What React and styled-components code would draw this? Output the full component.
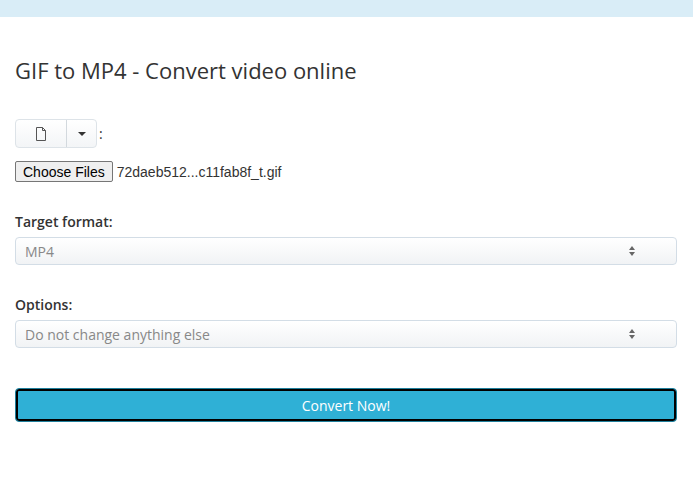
import React from "react";
import styled, { createGlobalStyle } from "styled-components";

const G = createGlobalStyle`
  body { margin: 0; font-family: "Open Sans", sans-serif; color: #333; background: #fff; }
`;
const TopBar = styled.div`height: 17px; background: #d9edf7;`;
const Main = styled.div`padding: 0 16px 0 15px; display: flex; flex-direction: column;`;
const Title = styled.h1`font-size: 22px; font-weight: 400; margin: 38px 0 0; line-height: 30px; color: #333;`;
const Row = styled.div`display: flex; align-items: center; margin-top: ${p => p.$mt}px;`;
const Split = styled.div`display: flex; height: 27px; border: 1px solid #dde3e8; border-radius: 4px; background: linear-gradient(#fff, #f3f5f7);`;
const SplitPart = styled.div`display: flex; align-items: center; justify-content: center; width: ${p => p.$w}px; border-left: ${p => p.$sep ? "1px solid #d3d9de" : "none"};`;
const Colon = styled.span`font-size: 14px; margin-left: 2px;`;
const FileBtn = styled.button`font-family: "Liberation Sans", Arial, sans-serif; font-size: 14px; height: 21px; padding: 0 7px; border: 1px solid #767676; border-radius: 2px; background: #efefef; color: #000;`;
const FileName = styled.span`font-family: "Liberation Sans", Arial, sans-serif; font-size: 14px; margin-left: 4px; color: #333;`;
const Label = styled.div`font-size: 14px; font-weight: 600; margin-top: ${p => p.$mt}px; line-height: 20px;`;
const Select = styled.div`margin-top: 5px; height: 26px; border: 1px solid #d3dde6; border-radius: 4px; background: linear-gradient(#fff, #f1f3f5); display: flex; align-items: center; justify-content: space-between; padding: 0 40px 0 9px; font-size: 14px; color: #888;`;
const Convert = styled.button`margin-top: 40px; height: 34px; border: 1px solid #1f7f9c; border-radius: 4px; box-shadow: inset 0 0 0 2px #000; background: #2fb0d6; color: #fff; font-family: "Open Sans", sans-serif; font-size: 14px;`;

const Arrows = () => (
  <svg width="8" height="12" viewBox="0 0 8 12"><path d="M4 1L7 5H1z M4 11L7 7H1z" fill="#666" /></svg>
);

export default function App() {
  return (
    <>
      <G />
      <TopBar />
      <Main>
        <Title>GIF to MP4 - Convert video online</Title>
        <Row $mt={34}>
          <Split>
            <SplitPart $w={50}>
              <svg width="12" height="14" viewBox="0 0 12 14"><path d="M1.5 0.5H7.5L10.5 3.5V13.5H1.5Z M7.5 0.5V3.5H10.5" fill="none" stroke="#555" strokeWidth="1" /></svg>
            </SplitPart>
            <SplitPart $w={29} $sep>
              <svg width="8" height="4" viewBox="0 0 8 4"><path d="M0 0H8L4 4z" fill="#333" /></svg>
            </SplitPart>
          </Split>
          <Colon>:</Colon>
        </Row>
        <Row $mt={13}>
          <FileBtn>Choose Files</FileBtn>
          <FileName>72daeb512...c11fab8f_t.gif</FileName>
        </Row>
        <Label $mt={30}>Target format:</Label>
        <Select>MP4<Arrows /></Select>
        <Label $mt={30}>Options:</Label>
        <Select>Do not change anything else<Arrows /></Select>
        <Convert>Convert Now!</Convert>
      </Main>
    </>
  );
}
